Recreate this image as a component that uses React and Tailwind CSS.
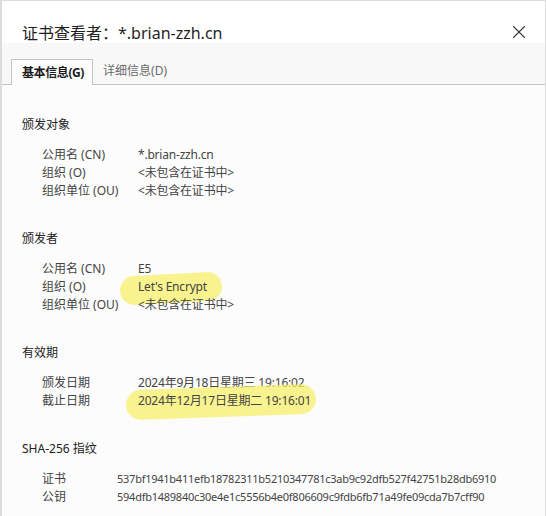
import { X } from "lucide-react";

const sections = [
  {
    title: "颁发对象",
    labelWidth: "w-[96px]",
    rows: [
      ["公用名 (CN)", "*.brian-zzh.cn"],
      ["组织 (O)", "<未包含在证书中>"],
      ["组织单位 (OU)", "<未包含在证书中>"],
    ],
  },
  {
    title: "颁发者",
    labelWidth: "w-[96px]",
    rows: [
      ["公用名 (CN)", "E5"],
      ["组织 (O)", "Let's Encrypt", "org"],
      ["组织单位 (OU)", "<未包含在证书中>"],
    ],
  },
  {
    title: "有效期",
    labelWidth: "w-[96px]",
    rows: [
      ["颁发日期", "2024年9月18日星期三 19:16:02"],
      ["截止日期", "2024年12月17日星期二 19:16:01", "date"],
    ],
  },
  {
    title: "SHA-256 指纹",
    labelWidth: "w-[75px]",
    hash: true,
    rows: [
      ["证书", "537bf1941b411efb18782311b5210347781c3ab9c92dfb527f42751b28db6910"],
      ["公钥", "594dfb1489840c30e4e1c5556b4e0f806609c9fdb6fb71a49fe09cda7b7cff90"],
    ],
  },
];

function Highlight({ kind }) {
  // highlighter marks drawn over the screenshot
  if (kind === "org") {
    return (
      <span className="absolute left-[-18px] top-[-4px] h-[29px] w-[102px] -rotate-3 rounded-full bg-[#f7f06a]/75 blur-[0.5px]" />
    );
  }
  return (
    <span className="absolute left-[-12px] top-[-5px] h-[30px] w-[190px] -rotate-2 rounded-full bg-[#f7f06a]/75 blur-[0.5px]" />
  );
}

export default function App() {
  return (
    <div className="h-[516px] w-[546px] overflow-hidden border-t border-l-2 border-r border-[#dcdcdc] bg-[#fcfcfc] font-['Segoe_UI','Noto_Sans','Noto_Sans_CJK_SC',sans-serif] text-[#333]">
      {/* Title bar */}
      <div className="flex h-[42px] items-end justify-between bg-white pl-[20px] pr-[15px]">
        <h1 className="text-[16px] leading-[20px] text-[#1f1f1f]">
          证书查看者：*.brian-zzh.cn
        </h1>
        <X size={22} strokeWidth={1.2} className="text-[#3a3a3a]" />
      </div>

      {/* Tabs */}
      <div className="flex h-[42px] items-end border-b border-[#c4c4c4] bg-[#f8f8f8] pl-[9px]">
        <div className="-mb-px flex h-[26px] items-center border border-b-0 border-[#c4c4c4] bg-[#fcfcfc] pl-[10px] pr-[8px] text-[12px] font-bold tracking-[-0.4px] text-[#1a1a1a]">
          基本信息(G)
        </div>
        <div className="flex h-[26px] items-center px-[10px] text-[12px] text-[#6a6a6a]">
          详细信息(D)
        </div>
      </div>

      {/* Content */}
      <div className="flex flex-col gap-[30px] pl-[20px] pt-[31px] text-[12px] leading-[18px]">
        {sections.map((s) => (
          <div key={s.title}>
            <div className="text-[#222]">{s.title}</div>
            <div className="mt-[12px] pl-[20px]">
              {s.rows.map(([label, value, mark]) => (
                <div key={label} className="flex text-[#444]">
                  <div className={`${s.labelWidth} shrink-0`}>{label}</div>
                  <div className="relative">
                    {mark && <Highlight kind={mark} />}
                    <span
                      className={`relative whitespace-nowrap ${
                        s.hash ? "text-[11px] tracking-[-0.25px]" : "tracking-[-0.2px]"
                      }`}
                    >
                      {value}
                    </span>
                  </div>
                </div>
              ))}
            </div>
          </div>
        ))}
      </div>
    </div>
  );
}
